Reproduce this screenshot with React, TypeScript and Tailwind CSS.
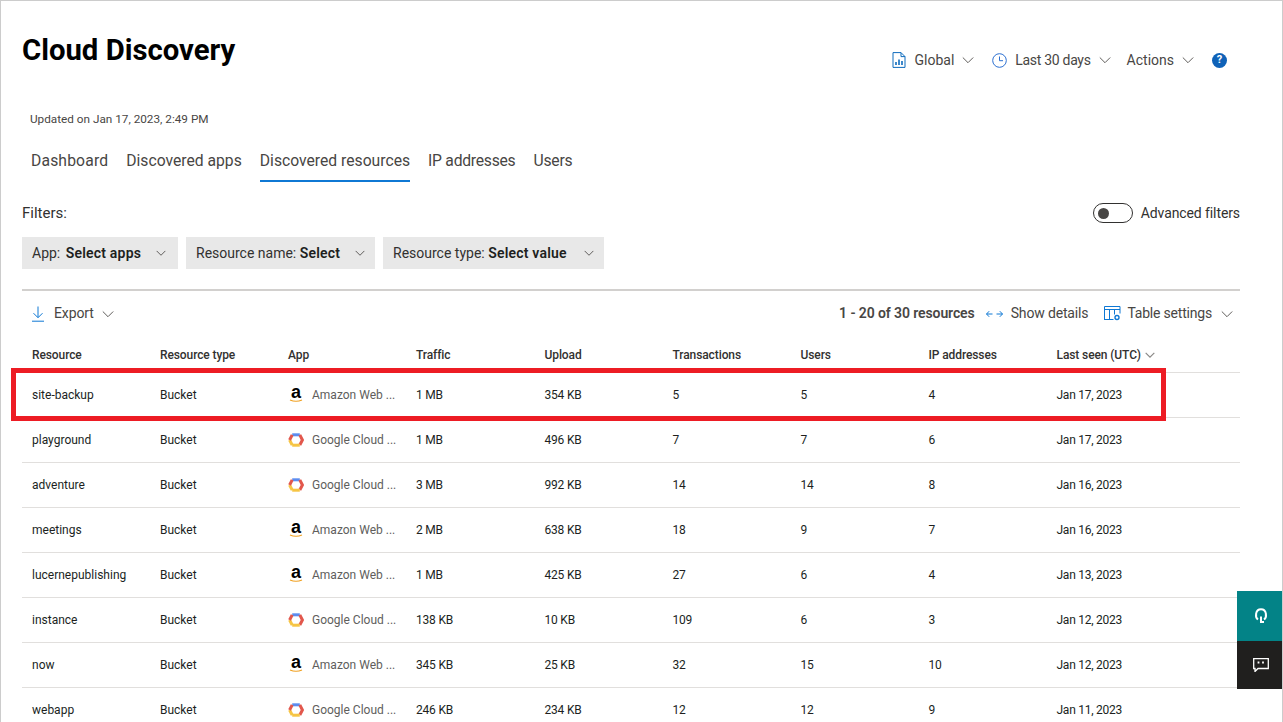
import React from 'react';

const F = "font-['Roboto','Liberation_Sans',sans-serif]";

function Chevron({ className = '', size = 12, color = '#605e5c', sw = 1 }: { className?: string; size?: number; color?: string; sw?: number }) {
  return (
    <svg width={size} height={size} viewBox="0 0 12 12" className={className} fill="none" stroke={color} strokeWidth={sw}>
      <path d="M0.8 3.5 L6 8.7 L11.2 3.5" />
    </svg>
  );
}

function Amazon() {
  return (
    <svg width="14" height="16" viewBox="0 0 14 16" className="overflow-visible">
      <text x="7" y="11" textAnchor="middle" fontFamily="Liberation Sans" fontWeight="700" fontSize="18" fill="#000">a</text>
      <path d="M1 13 Q7 15.500 13 13" fill="none" stroke="#f0a020" strokeWidth="1.2" />
    </svg>
  );
}

function GoogleCloud() {
  return (
    <svg width="16" height="14" viewBox="0 0 16 14" fill="none" strokeWidth="3">
      <path d="M4.2 1.8 L11.8 1.8" stroke="#5c8df0" />
      <path d="M11.8 1.8 L14.4 7 L11.8 12" stroke="#e2574c" />
      <path d="M11.8 12.2 L4.2 12.2" stroke="#f6c544" />
      <path d="M4.2 12.2 L1.6 7" stroke="#f6c544" />
      <path d="M1.6 7 L4.2 1.8" stroke="#e2574c" />
    </svg>
  );
}

const rows = [
  ['site-backup', 'a', '1 MB', '354 KB', '5', '5', '4', 'Jan 17, 2023'],
  ['playground', 'g', '1 MB', '496 KB', '7', '7', '6', 'Jan 17, 2023'],
  ['adventure', 'g', '3 MB', '992 KB', '14', '14', '8', 'Jan 16, 2023'],
  ['meetings', 'a', '2 MB', '638 KB', '18', '9', '7', 'Jan 16, 2023'],
  ['lucernepublishing', 'a', '1 MB', '425 KB', '27', '6', '4', 'Jan 13, 2023'],
  ['instance', 'g', '138 KB', '10 KB', '109', '6', '3', 'Jan 12, 2023'],
  ['now', 'a', '345 KB', '25 KB', '32', '15', '10', 'Jan 12, 2023'],
  ['webapp', 'g', '246 KB', '234 KB', '12', '12', '9', 'Jan 11, 2023'],
];

const cols = 'grid grid-cols-[128px_128px_128px_128.5px_128px_128px_128px_128px_1fr] pl-[10px]';

function FilterChip({ label, value, w, pr, gap }: { label: string; value: string; w: string; pr: string; gap: string }) {
  return (
    <div className={`${w} ${pr} h-8 bg-[#e8e8e8] flex items-center justify-between pl-[10px] text-[14px] text-[#323130]`}>
      <span className="whitespace-nowrap">
        {label} <b className={`${gap} font-semibold text-[#201f1e] tracking-[0.2px]`}>{value}</b>
      </span>
      <Chevron size={10} sw={1.2} />
    </div>
  );
}

export default function App() {
  return (
    <div className={`${F} w-[1283px] h-[722px] overflow-hidden bg-white relative border-l border-r border-t border-[#cccccc] pl-[21px] pr-[42px]`}>
      <div className="flex justify-between h-[103px]">
        <h1 className="mt-[30px] text-[29.3px] leading-[38px] font-bold text-black">Cloud Discovery</h1>
        <div className="flex items-center h-5 mt-[49px] mr-[13px] text-[14px] text-[#484644]">
          <svg width="14" height="16" viewBox="0 0 14 16" fill="none" className="mr-2">
            <path d="M1 .6h8l4 4v10.800H1z M9 .6v4h4" stroke="#0f6cbd" />
            <path d="M4 13v-3M7 13V7.500M10 13V9" stroke="#0f6cbd" strokeWidth="1.6" />
          </svg>
          <span>Global</span>
          <Chevron className="ml-2" />
          <svg width="15" height="15" viewBox="0 0 15 15" fill="none" className="ml-[18px] mr-2" stroke="#2b6fd1">
            <circle cx="7.500" cy="7.500" r="6.800" />
            <path d="M7.500 3.500v4.200h3.500" />
          </svg>
          <span className="tracking-[-0.3px]">Last 30 days</span>
          <Chevron className="ml-2" />
          <span className="ml-4">Actions</span>
          <Chevron className="ml-2" />
          <div className="ml-[18px] w-[15px] h-[15px] rounded-full bg-[#0f62b8] text-white text-[11px] font-bold flex items-center justify-center">?</div>
        </div>
      </div>

      <div className="ml-2 text-[11.75px] leading-4 text-[#484644] h-4 mt-[7px]">Updated on Jan 17, 2023, 2:49 PM</div>

      <div className="flex mt-[22px] ml-[9px] text-[15.7px] text-[#484644] h-[33px] gap-[18px]">
        <div className="leading-[24px] tracking-[0.15px]">Dashboard</div>
        <div className="leading-[24px]">Discovered apps</div>
        <div className="leading-[24px] border-b-2 border-[#0f78d4]">Discovered resources</div>
        <div className="leading-[24px] tracking-[-0.25px]">IP addresses</div>
        <div className="leading-[24px] tracking-[-0.2px]">Users</div>
      </div>

      <div className="flex justify-between items-center mt-[21px] h-5">
        <span className="text-[15px] text-[#323130]">Filters:</span>
        <div className="flex items-center text-[14px] text-[#323130] tracking-[-0.1px]">
          <div className="w-10 h-5 rounded-full border border-[#323130] flex items-center pl-1 mr-2">
            <div className="w-[11px] h-[11px] rounded-full bg-[#484644]" />
          </div>
          Advanced filters
        </div>
      </div>

      <div className="flex gap-2 mt-[14px]">
        <FilterChip label="App:" value="Select apps" w="w-[156px]" pr="pr-[12px]" gap="ml-[2px]" />
        <FilterChip label="Resource name:" value="Select" w="w-[189px]" pr="pr-[10px]" gap="ml-0" />
        <FilterChip label="Resource type:" value="Select value" w="w-[221px]" pr="pr-[10px]" gap="ml-0" />
      </div>

      <div className="mt-[20px] border-t-2 border-[#d2d0ce] h-[47px] flex items-center justify-between text-[14px] text-[#484644]">
        <div className="flex items-center ml-[9px]">
          <svg width="14" height="16" viewBox="0 0 14 16" fill="none" stroke="#0f78d4" className="mr-[9px]">
            <path d="M7 .500v11M2.500 7.200 7 11.700l4.500-4.500M1 15.200h12" />
          </svg>
          <span className="tracking-[-0.1px]">Export</span>
          <Chevron className="ml-2" />
        </div>
        <div className="flex items-center">
          <b className="font-semibold mr-[11px] tracking-[-0.1px]">1 - 20 of 30 resources</b>
          <svg width="17" height="8" viewBox="0 0 17 8" fill="none" stroke="#0f78d4" className="mr-[8px]">
            <path d="M.5 4h6M3.200 1.200.5 4l2.700 2.800M10.500 4h6M13.800 1.200 16.500 4l-2.700 2.800" />
          </svg>
          <span className="tracking-[-0.15px]">Show details</span>
          <svg width="17" height="15" viewBox="0 0 17 15" fill="none" stroke="#0f78d4" className="ml-[16px] mr-[6px]">
            <path d="M.5 14V.5h15.500v7M.5 3.500h15.500M.5 13.500h9M5.500 3.500v10M10.500 3.500v5" />
            <circle cx="13" cy="11.500" r="2" strokeWidth="1.4" />
          </svg>
          <span className="tracking-[-0.2px]">Table settings</span>
          <Chevron className="ml-[9px] mr-[7px]" />
        </div>
      </div>

      <div className="relative text-[12px] -mt-[3px]">
        <div className={`${cols} h-[23px] items-center font-medium text-[#323130] mt-[10px]`}>
          {['Resource', 'Resource type', 'App', 'Traffic', 'Upload', 'Transactions', 'Users', 'IP addresses'].map((h) => (
            <div key={h} className="tracking-[-0.1px]">{h}</div>
          ))}
          <div className="flex items-center tracking-[-0.1px]">
            Last seen (UTC)
            <Chevron className="ml-1" size={10} color="#8a8886" sw={1.4} />
          </div>
        </div>
        <div className="h-[6px]" />
        {rows.map((r) => (
          <div key={r[0]} className={`${cols} h-[45px] items-center border-t border-[#e1dfdd] text-[#201f1e]`}>
            <div>{r[0]}</div>
            <div>Bucket</div>
            <div className="flex items-center">
              <div className="w-4 flex justify-center mr-2">{r[1] === 'a' ? <Amazon /> : <GoogleCloud />}</div>
              <span className="text-[#605e5c]">{r[1] === 'a' ? 'Amazon Web ...' : 'Google Cloud ...'}</span>
            </div>
            <div className="tracking-[-0.2px]">{r[2]}</div>
            <div className="tracking-[-0.2px]">{r[3]}</div>
            <div className="tracking-[-0.2px]">{r[4]}</div>
            <div className="tracking-[-0.2px]">{r[5]}</div>
            <div className="tracking-[-0.2px]">{r[6]}</div>
            <div className="tracking-[-0.25px]">{r[7]}</div>
          </div>
        ))}
        <div className="absolute left-[-11px] top-[25px] w-[1155px] h-[53px] border-[5px] border-[#ed1c24]" />
      </div>

      <div className="absolute right-0 top-[590px] w-[45px] h-[50px] bg-[#038387] flex items-center justify-center">
        <svg width="14" height="16" viewBox="0 0 14 16" fill="none" stroke="#fff" strokeWidth="2" className="ml-[3px]">
          <path d="M4 11.500C1 9.500 1 1.200 7 1.200S13 9.500 10 11.500" />
          <path d="M7 8.500V14h3" />
        </svg>
      </div>
      <div className="absolute right-0 top-[640px] w-[45px] h-[48px] bg-[#201f1e] flex items-center justify-center">
        <svg width="16" height="14" viewBox="0 0 16 14" fill="none" stroke="#fff" strokeWidth="1.3" className="ml-[3px]">
          <path d="M.7.700h14.600v9.800H5l-3 3v-3H.7z" />
          <path d="M5.500 3.500v2M10 3.500v2" strokeWidth="1.800" />
        </svg>
      </div>
    </div>
  );
}
